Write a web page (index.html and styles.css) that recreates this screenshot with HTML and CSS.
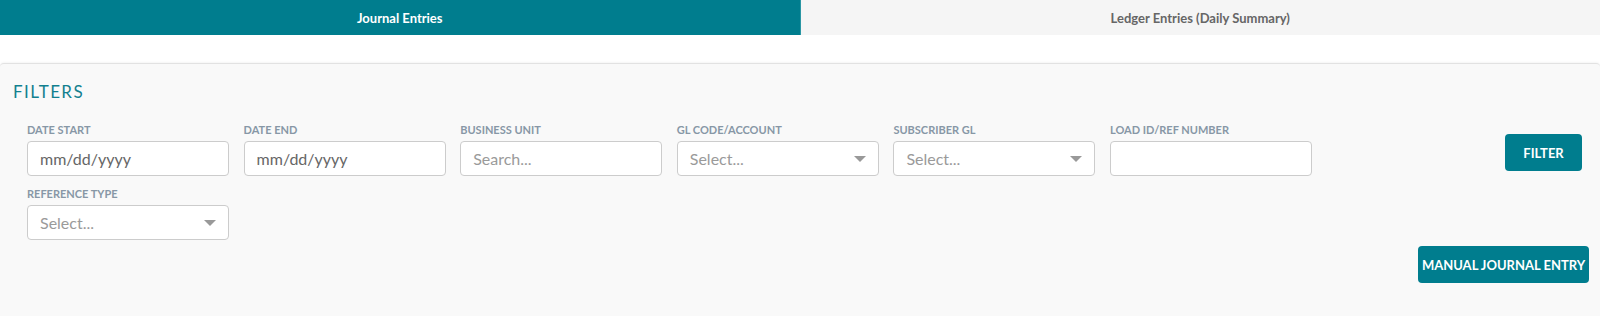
FILE: index.html
```html
<!DOCTYPE html>
<html lang="en">
<head>
<meta charset="utf-8">
<title>Journal Entries</title>
<link rel="stylesheet" href="styles.css">
</head>
<body>
<nav class="tabs">
  <div class="tab tab-active">Journal Entries</div>
  <div class="tab">Ledger Entries (Daily Summary)</div>
</nav>

<section class="panel">
  <h2 class="panel-title">FILTERS</h2>
  <div class="filter-area">
    <div class="filter-grid">
      <div class="field">
        <label class="field-label">DATE START</label>
        <input class="input input-date" type="text" placeholder="mm/dd/yyyy">
      </div>
      <div class="field">
        <label class="field-label">DATE END</label>
        <input class="input input-date" type="text" placeholder="mm/dd/yyyy">
      </div>
      <div class="field">
        <label class="field-label">BUSINESS UNIT</label>
        <input class="input" type="text" placeholder="Search...">
      </div>
      <div class="field">
        <label class="field-label">GL CODE/ACCOUNT</label>
        <div class="input select"><span>Select...</span><svg class="caret" width="12" height="6" viewBox="0 0 12 6"><path d="M0 0H12L6 6Z"/></svg></div>
      </div>
      <div class="field">
        <label class="field-label">SUBSCRIBER GL</label>
        <div class="input select"><span>Select...</span><svg class="caret" width="12" height="6" viewBox="0 0 12 6"><path d="M0 0H12L6 6Z"/></svg></div>
      </div>
      <div class="field">
        <label class="field-label">LOAD ID/REF NUMBER</label>
        <input class="input" type="text">
      </div>
      <div class="field">
        <label class="field-label">REFERENCE TYPE</label>
        <div class="input select"><span>Select...</span><svg class="caret" width="12" height="6" viewBox="0 0 12 6"><path d="M0 0H12L6 6Z"/></svg></div>
      </div>
    </div>
    <div class="actions">
      <button class="btn btn-filter">FILTER</button>
      <button class="btn btn-manual">MANUAL JOURNAL ENTRY</button>
    </div>
  </div>
</section>
</body>
</html>
```

FILE: styles.css
```css
* { box-sizing: border-box; }

html, body {
  margin: 0;
  padding: 0;
  background: #ffffff;
  font-family: Lato, "Open Sans", "Liberation Sans", sans-serif;
}

.tabs {
  display: flex;
  height: 35px;
}

.tab {
  flex: 1 1 0;
  display: flex;
  align-items: center;
  justify-content: center;
  background: #f5f5f5;
  color: #666666;
  font-size: 13px;
  font-weight: 700;
}

.tab-active {
  background: #007d8e;
  color: #ffffff;
  border-right: 1px solid #2a96a4;
}

.panel {
  margin-top: 28px;
  min-height: 253px;
  background: #f9f9f9;
  border-top: 1px solid #e2e2e2;
  border-radius: 4px 4px 0 0;
  box-shadow: 0 -1px 2px rgba(0, 0, 0, 0.04);
  padding: 18px 11px 0 13px;
}

.panel-title {
  margin: 0;
  font-size: 17px;
  line-height: 20px;
  font-weight: 400;
  letter-spacing: 1.4px;
  color: #12808f;
}

.filter-area {
  display: flex;
  margin-top: 21px;
}

.filter-grid {
  display: grid;
  grid-template-columns: repeat(6, 202px);
  column-gap: 14.6px;
  row-gap: 11px;
  margin-left: 14px;
  align-content: start;
}

.field {
  display: flex;
  flex-direction: column;
}

.field-label {
  font-size: 11px;
  line-height: 13px;
  font-weight: 700;
  color: #8797a6;
  margin-bottom: 5px;
}

.input {
  height: 35px;
  width: 100%;
  border: 1px solid #cccccc;
  border-radius: 4px;
  background: #ffffff;
  padding: 0 12px;
  font-family: inherit;
  font-size: 16px;
  color: #555555;
  outline: none;
}

.input::placeholder {
  color: #9a9a9a;
}

.input-date::placeholder {
  color: #666666;
}

.select {
  display: flex;
  align-items: center;
  justify-content: space-between;
  color: #9a9a9a;
}

.caret {
  fill: #999999;
  flex: none;
}

.actions {
  margin-left: auto;
  display: flex;
  flex-direction: column;
  align-items: flex-end;
}

.btn {
  border: none;
  border-radius: 4px;
  background: #007d8e;
  color: #ffffff;
  font-family: inherit;
  font-size: 13px;
  font-weight: 700;
  height: 37px;
  cursor: pointer;
}

.btn-filter {
  margin-top: 11px;
  margin-right: 7px;
  width: 77px;
  padding: 0;
}

.btn-manual {
  margin-top: 75px;
  width: 171px;
  padding: 0;
}
```
